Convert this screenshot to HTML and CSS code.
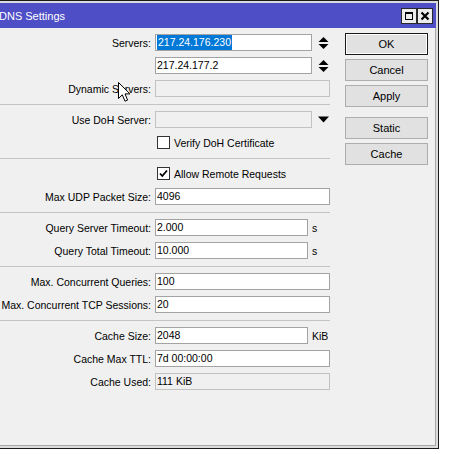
FILE: index.html
```html
<!DOCTYPE html>
<html>
<head>
<meta charset="utf-8">
<title>DNS Settings</title>
<link rel="stylesheet" href="styles.css">
</head>
<body>
<div class="window">
  <div class="titlebar">
    <span class="title">DNS Settings</span>
    <div class="tb-buttons">
      <span class="tb-btn">
        <svg width="14" height="14" viewBox="0 0 14 14"><rect x="3.5" y="3.5" width="7" height="7" fill="none" stroke="#000" stroke-width="1"/><rect x="3" y="3" width="8" height="2" fill="#000"/></svg>
      </span>
      <span class="tb-btn">
        <svg width="14" height="14" viewBox="0 0 14 14"><path d="M3.5 3.5 L10.5 10.5 M10.5 3.5 L3.5 10.5" stroke="#000" stroke-width="2.2" fill="none"/></svg>
      </span>
    </div>
  </div>
  <div class="client">
    <div class="form">
      <div class="row">
        <span class="lbl">Servers:</span>
        <div class="field"><span class="input w-spin"><span class="sel">217.24.176.230</span></span><span class="spin"><svg width="11" height="14" viewBox="0 0 11 14"><polygon points="0.5,6 5.5,1 10.5,6" fill="#000"/><polygon points="0.5,8 5.5,13 10.5,8" fill="#000"/></svg></span></div>
      </div>
      <div class="row">
        <span class="lbl"></span>
        <div class="field"><span class="input w-spin">217.24.177.2</span><span class="spin"><svg width="11" height="14" viewBox="0 0 11 14"><polygon points="0.5,6 5.5,1 10.5,6" fill="#000"/><polygon points="0.5,8 5.5,13 10.5,8" fill="#000"/></svg></span></div>
      </div>
      <div class="row">
        <span class="lbl">Dynamic Servers:</span>
        <div class="field"><span class="input w-full disabled"></span></div>
      </div>
      <div class="sep"></div>
      <div class="row">
        <span class="lbl">Use DoH Server:</span>
        <div class="field"><span class="input w-spin disabled"></span><span class="spin"><svg width="11" height="7" viewBox="0 0 11 7"><polygon points="0,0.5 11,0.5 5.5,6.5" fill="#000"/></svg></span></div>
      </div>
      <div class="row">
        <span class="lbl"></span>
        <div class="field"><span class="check"></span><span class="ctext">Verify DoH Certificate</span></div>
      </div>
      <div class="sep"></div>
      <div class="row">
        <span class="lbl"></span>
        <div class="field"><span class="check"><svg width="11" height="11" viewBox="0 0 11 11"><path d="M2 5.5 L4.3 8 L9 2.5" stroke="#000" stroke-width="1.8" fill="none"/></svg></span><span class="ctext">Allow Remote Requests</span></div>
      </div>
      <div class="row">
        <span class="lbl">Max UDP Packet Size:</span>
        <div class="field"><span class="input w-full">4096</span></div>
      </div>
      <div class="sep"></div>
      <div class="row">
        <span class="lbl">Query Server Timeout:</span>
        <div class="field"><span class="input w-unit">2.000</span><span class="unit">s</span></div>
      </div>
      <div class="row">
        <span class="lbl">Query Total Timeout:</span>
        <div class="field"><span class="input w-unit">10.000</span><span class="unit">s</span></div>
      </div>
      <div class="sep"></div>
      <div class="row">
        <span class="lbl">Max. Concurrent Queries:</span>
        <div class="field"><span class="input w-full">100</span></div>
      </div>
      <div class="row">
        <span class="lbl">Max. Concurrent TCP Sessions:</span>
        <div class="field"><span class="input w-full">20</span></div>
      </div>
      <div class="sep"></div>
      <div class="row">
        <span class="lbl">Cache Size:</span>
        <div class="field"><span class="input w-unit">2048</span><span class="unit">KiB</span></div>
      </div>
      <div class="row">
        <span class="lbl">Cache Max TTL:</span>
        <div class="field"><span class="input w-full">7d 00:00:00</span></div>
      </div>
      <div class="row">
        <span class="lbl">Cache Used:</span>
        <div class="field"><span class="input w-full disabled">111 KiB</span></div>
      </div>
    </div>
    <div class="buttons">
      <span class="btn default">OK</span>
      <span class="btn">Cancel</span>
      <span class="btn group-end">Apply</span>
      <span class="btn">Static</span>
      <span class="btn">Cache</span>
    </div>
    <svg class="cursor" width="14" height="21" viewBox="0 0 14 21"><path d="M0.5 0.5 L0.5 16.5 L4.3 12.8 L7 19.2 L9.6 18.1 L7 11.9 L12 11.9 Z" fill="#fff" stroke="#000" stroke-width="1" stroke-linejoin="round"/></svg>
  </div>
</div>
</body>
</html>
```

FILE: styles.css
```css
html, body {
  margin: 0;
  padding: 0;
  background: #ffffff;
  overflow: hidden;
}

body {
  width: 451px;
  height: 454px;
  font-family: "Liberation Sans", Arial, sans-serif;
  font-size: 10.5px;
  color: #000;
}

.window {
  margin-left: -6px;
  width: 445px;
  height: 449px;
  box-sizing: border-box;
  border: 1px solid #1c1c1c;
  padding: 2px;
  background: #dcdcdc;
  display: flex;
  flex-direction: column;
}

.titlebar {
  height: 25px;
  flex: none;
  background: #4e4ec6;
  display: flex;
  align-items: center;
  justify-content: space-between;
  padding: 0 4px 0 2px;
}

.title {
  color: #fff;
  font-size: 11px;
}

.tb-buttons {
  display: flex;
  gap: 2px;
  padding-top: 1px;
}

.tb-btn {
  width: 14px;
  height: 14px;
  box-sizing: border-box;
  background: #ececec;
  border: 0;
  outline: 1px solid #2a2a2a;
  display: flex;
  align-items: center;
  justify-content: center;
}

.tb-btn svg {
  display: block;
}

.client {
  position: relative;
  flex: 1;
  background: #f0f0f0;
  border-right: 1px solid #a8a8a8;
  border-bottom: 1px solid #a8a8a8;
  display: flex;
  align-items: flex-start;
  padding-top: 3px;
}

.form {
  display: flex;
  flex-direction: column;
  width: 333px;
}

.row {
  display: grid;
  grid-template-columns: 154px 175px;
  column-gap: 4px;
  height: 23px;
  align-items: center;
}

.lbl {
  text-align: right;
  white-space: nowrap;
}

.field {
  display: flex;
  align-items: center;
  height: 17px;
}

.input {
  flex: none;
  height: 17px;
  box-sizing: border-box;
  border: 1px solid #a3a3a3;
  background: #fff;
  padding: 0 1px;
  line-height: 15px;
  white-space: nowrap;
}

.input.disabled {
  background: #f0f0f0;
  border-color: #c2c2c2;
}

.w-full { width: 175px; }
.w-spin { width: 157px; }
.w-unit { width: 153px; }

.sel {
  background: #0078d7;
  color: #fff;
  display: inline-block;
  line-height: 15px;
  padding: 0 1px;
}

.spin {
  margin-left: 6px;
  display: flex;
  align-items: center;
}

.spin svg {
  display: block;
}

.unit {
  margin-left: 4px;
}

.check {
  width: 13px;
  height: 13px;
  box-sizing: border-box;
  border: 1px solid #333;
  background: #fff;
  margin-left: 2px;
  display: flex;
  align-items: center;
  justify-content: center;
}

.check svg {
  display: block;
}

.ctext {
  margin-left: 4px;
}

.sep {
  height: 1px;
  background: #c4c4c4;
  margin: 4px 0 3px;
}

.buttons {
  display: flex;
  flex-direction: column;
  gap: 4px;
  margin-left: 15px;
  padding-top: 2px;
}

.btn {
  width: 83px;
  height: 22px;
  box-sizing: border-box;
  border: 1px solid #adadad;
  background: #e1e1e1;
  display: flex;
  align-items: center;
  justify-content: center;
  font-size: 11px;
}

.btn.default {
  border: 1px solid #1a1a1a;
  box-shadow: inset 0 0 0 1px #ffffff;
}

.btn.group-end {
  margin-bottom: 6px;
}

.cursor {
  position: absolute;
  left: 121px;
  top: 54px;
}
```
